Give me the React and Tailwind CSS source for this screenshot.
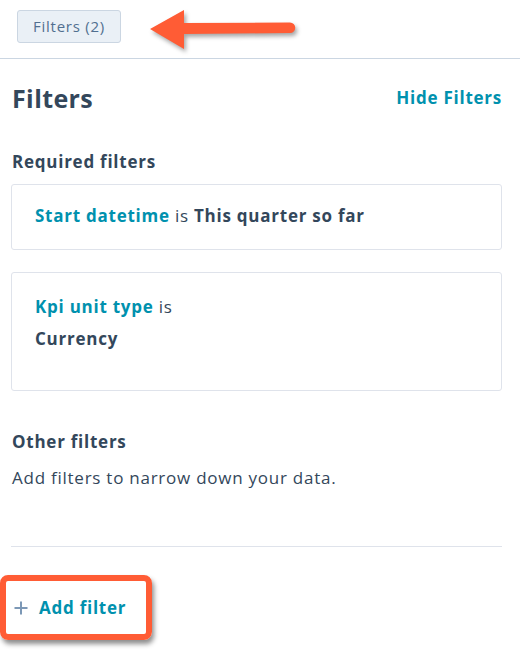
export default function App() {
  return (
    <div className="w-[520px] h-[662px] bg-white text-[#33475b] font-['Open_Sans','Noto_Sans',sans-serif] tracking-[0.75px] overflow-hidden">
      <div className="relative h-[59px] border-b border-[#cbd6e2] flex items-start pl-[17px] pt-[10px]">
        <button className="h-[33px] w-[104px] rounded-[3px] bg-[#eaf0f6] border border-[#cbd6e2] text-[#516f90] text-[15px] leading-none">
          Filters (2)
        </button>
        <svg className="absolute left-[146px] top-[6px] drop-shadow-[2px_3px_2px_rgba(0,0,0,0.35)]" width="156" height="48" viewBox="146 6 156 48">
          <path d="M150 29 L184 10 L184 23 L290 22.5 A5.2 5.2 0 0 1 290 33 L184 34 L184 49 Z" fill="#ff5c35" />
        </svg>
      </div>

      <div className="pl-[12px] pr-[18px]">
        <div className="flex items-center justify-between pt-[24px]">
          <h1 className="text-[25px] font-bold leading-[30px] tracking-[0.4px]">Filters</h1>
          <span className="text-[#0091ae] font-bold text-[17px]">Hide Filters</span>
        </div>

        <h2 className="mt-[38px] text-[17px] font-bold leading-[22px]">Required filters</h2>

        <div className="mt-[11px] -ml-px border border-[#dfe3eb] rounded-[3px] h-[66px] pl-[23px] pt-[20px] text-[17px] leading-[22px]">
          <span className="text-[#0091ae] font-bold">Start datetime</span> is{' '}
          <span className="font-bold">This quarter so far</span>
        </div>

        <div className="mt-[22px] -ml-px border border-[#dfe3eb] rounded-[3px] h-[119px] pl-[23px] pt-[18px] text-[17px] leading-[32px]">
          <div>
            <span className="text-[#0091ae] font-bold">Kpi unit type</span> is
          </div>
          <div className="font-bold">Currency</div>
        </div>

        <h2 className="mt-[40px] text-[17px] font-bold leading-[22px]">Other filters</h2>
        <p className="mt-[14px] text-[17px] leading-[22px]">Add filters to narrow down your data.</p>

        <div className="mt-[57px] -ml-px border-t border-[#dfe3eb]" />
      </div>

      <div className="mt-[28px] ml-0 w-[152px] h-[65px] rounded-[8px] border-[6px] border-[#ff5c35] shadow-[2px_4px_5px_rgba(0,0,0,0.45)] flex items-center pl-[7px] gap-[10px]">
        <svg width="16" height="16" viewBox="0 0 16 16">
          <path d="M8 1.5V14.5M1.5 8H14.5" stroke="#7c98b6" strokeWidth="2" />
        </svg>
        <span className="text-[#0091ae] font-bold text-[17px]">Add filter</span>
      </div>
    </div>
  );
}
